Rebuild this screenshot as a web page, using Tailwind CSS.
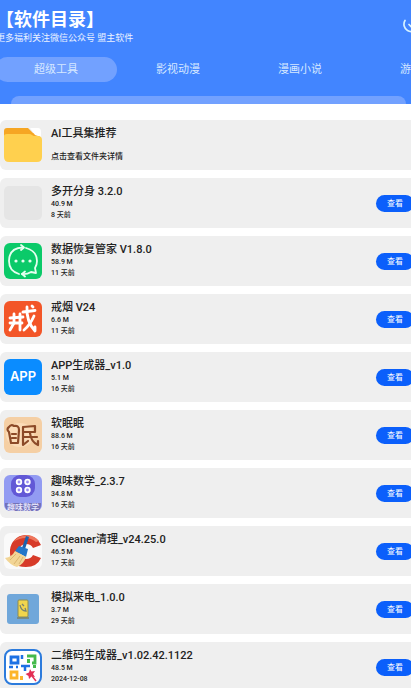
<!DOCTYPE html>
<html lang="zh-CN">
<head>
<meta charset="utf-8">
<meta name="viewport" content="width=device-width, initial-scale=1">
<title>软件目录</title>
<script src="https://cdn.jsdelivr.net/npm/@tailwindcss/browser@4"></script>
</head>
<body class="h-screen overflow-hidden bg-white font-[Roboto,'Noto_Sans_CJK_SC',sans-serif] text-[#222]">
<div class="flex h-full flex-col overflow-hidden">
  <header class="shrink-0 overflow-hidden bg-[#4285ff] text-white">
    <div class="flex items-center justify-between pt-2">
      <div class="-ml-1 whitespace-nowrap">
        <h1 class="text-[18px] leading-[24px] font-bold">【软件目录】</h1>
        <p class="text-[9px] leading-[12px] text-white/90">更多福利关注微信公众号 盟主软件</p>
      </div>
      <button type="button" aria-label="刷新" class="-mr-2 shrink-0">
        <svg width="16" height="16" viewBox="0 0 16 16" fill="none" stroke="#d5f2ff" stroke-width="1.7" stroke-linecap="round"><path d="M2 2.500A6.800 6.800 0 0 0 14.500 10"/><path d="M6 6.500L8 8.500L11 6"/></svg>
      </button>
    </div>
    <nav class="-ml-[5px] mt-[13px] flex text-[11px] text-[#d6e8ff]">
      <a href="#tools" class="flex h-[25px] w-[122px] shrink-0 items-center justify-center rounded-full bg-[#72a1ff] pt-0.5">超级工具</a>
      <a href="#video" class="flex h-[25px] w-[122px] shrink-0 items-center justify-center pt-0.5">影视动漫</a>
      <a href="#comics" class="flex h-[25px] w-[122px] shrink-0 items-center justify-center pt-0.5">漫画小说</a>
      <a href="#games" class="flex h-[25px] w-[122px] shrink-0 items-center justify-center pt-0.5">游戏专区</a>
    </nav>
    <div class="mt-[14px] mr-[5px] ml-[11px] h-2 rounded-t-lg bg-[#72a1ff]"></div>
  </header>

  <ul id="list" class="flex flex-col gap-2 pt-4"></ul>
</div>

<template id="row">
  <li class="flex h-[50px] shrink-0 items-center overflow-hidden rounded-l-md bg-[#efefef] pl-1">
    <span data-icon class="h-9 w-[38px] shrink-0"></span>
    <div class="ml-[9px] flex-1 whitespace-nowrap">
      <h2 data-name class="text-[11px] leading-[16px] font-medium"></h2>
      <p data-size class="h-2 text-[7px] leading-[8px] font-medium"></p>
      <p data-date class="text-[7px] leading-[14px] font-medium"></p>
    </div>
    <button type="button" class="-mr-[3px] h-[17px] w-[38px] shrink-0 rounded-full bg-[#0b5ffb] text-[8px] leading-[17px] text-white">查看</button>
  </li>
</template>

<template id="icons">
  <svg width="38" height="36" viewBox="0 0 38 36">
    <path d="M3 1H24L29 6L36 8V16H0V4Q0 1 3 1Z" fill="#f6a623"/>
    <path d="M26 1H34Q37 1 37 5V10L31 8Z" fill="#fff"/>
    <path d="M0 9Q0 7 3 7H25Q27 7 28 8Q29 9 31 9H34Q38 9 38 13V30Q38 35 33 35H5Q0 35 0 30Z" fill="#ffd04e"/>
  </svg>
  <svg width="38" height="36" viewBox="0 0 38 36"><rect y="1" width="38" height="34" rx="5" fill="#e5e5e5"/></svg>
  <svg width="38" height="36" viewBox="0 0 38 36">
    <rect width="38" height="36" rx="6" fill="#0bca69"/>
    <g fill="none" stroke="#e6fff0" stroke-width="1.8" stroke-linecap="round" stroke-linejoin="round">
      <path d="M15 31Q5 28 5 18Q5 5 19 4.500"/><path d="M22 5Q33 8 33 18Q33 22 31 25L32 30L27 29Q23 31.500 18 31"/><path d="M17 2L20 4.500L17 7M21 28.500L18 31L21 33.500"/>
    </g>
    <g fill="#e6fff0"><circle cx="12" cy="18" r="1.600"/><circle cx="19" cy="18" r="1.600"/><circle cx="26" cy="18" r="1.600"/></g>
  </svg>
  <svg width="38" height="36" viewBox="0 0 38 36">
    <rect width="38" height="36" rx="6" fill="#f35628"/>
    <g fill="none" stroke="#fff" stroke-width="2.800" stroke-linecap="round" stroke-linejoin="round">
      <path d="M19 11L31 9.500"/><path d="M6 17L19 16"/><path d="M6 22H18"/><path d="M10 13V22L6 29"/><path d="M16 13V29"/><path d="M23 6Q22 20 31 30V26"/><path d="M30 15Q26 24 20 29"/><path d="M28 5L29 6"/>
    </g>
  </svg>
  <svg width="38" height="36" viewBox="0 0 38 36">
    <rect width="38" height="36" rx="6" fill="#0a8cff"/>
    <text x="19" y="22" text-anchor="middle" font-family="Inter, sans-serif" font-size="13" font-weight="600" fill="#fff">APP</text>
  </svg>
  <svg width="38" height="36" viewBox="0 0 38 36">
    <rect width="38" height="36" rx="6" fill="#f5cfa4"/><ellipse cx="16" cy="18" rx="14" ry="12" fill="#fbdcb8"/>
    <g fill="none" stroke="#8c4a28" stroke-width="2.200" stroke-linecap="round" stroke-linejoin="round">
      <path d="M5 15Q2 12 5 10Q7 7 10 9Q15 8 15 13L14 26H7L5 15ZM8 17H12M8 21H12"/>
      <path d="M19 10L31 9V15H20M19 10V28L24 24M20 20H33M26 16Q27 25 34 28V24"/>
    </g>
  </svg>
  <svg width="38" height="36" viewBox="0 0 38 36">
    <rect width="38" height="36" rx="6" fill="#929bf2"/><rect x="7" width="24" height="22" rx="9" fill="#6258d6"/>
    <g fill="#9d91f4" stroke="#fff" stroke-width="1.800"><circle cx="15" cy="7" r="2.300"/><circle cx="23.500" cy="7" r="2.300"/><circle cx="15" cy="15" r="2.300"/><circle cx="23.500" cy="15" r="2.300"/></g>
    <path d="M1 28H37V31Q36 36 32 36H6Q2 36 1 31Z" fill="#7472b8"/>
    <text x="19" y="35" text-anchor="middle" font-family="Noto Sans CJK SC, sans-serif" font-size="8" font-weight="500" fill="#e8e8ff">趣味数学</text>
  </svg>
  <svg width="38" height="36" viewBox="0 0 38 36">
    <rect width="38" height="36" rx="6" fill="#fafafa"/>
    <path d="M37 12Q32 2 21 2A16 16 0 0 0 6 17Q5 34 22 34Q33 34 37 25L29 22Q27 26 22 26Q15 25 15 18Q16 11 22 11Q27 11 29 15Z" fill="#d73b29"/>
    <path d="M9 9Q15 2 24 2Q31 3 35 8L32 9Q22 1 9 9Z" fill="#ee765c"/>
    <path d="M22 3L25 4L21 16L18 15Z" fill="#1c63ad"/>
    <path d="M15 13L24 16L22 24L11 18Z" fill="#2377c9"/>
    <path d="M11 18L22 24Q20 31 13 34Q6 32 1 25Q8 24 11 18Z" fill="#f2d595"/>
    <path d="M12 21L6 27M16 23L10 31M19 24L15 31" stroke="#dcb56e" fill="none"/>
  </svg>
  <svg width="38" height="36" viewBox="0 0 38 36">
    <rect x="3" y="3" width="32" height="30" rx="3" fill="#70a7da"/>
    <rect x="14" y="9" width="10" height="17" rx="1" fill="#f1d54d" stroke="#8d8b52"/>
    <path d="M16 14Q17 20 22 20L21 17M18 13L20 15M13 27H25" fill="none" stroke="#788270" stroke-width="1.300"/>
  </svg>
  <svg width="38" height="36" viewBox="0 0 38 36">
    <rect x="1" y="1" width="36" height="34" rx="7" fill="#fff" stroke="#2c7bdc" stroke-width="2"/>
    <g fill="none" stroke-width="2.800">
      <path d="M7 8H14V14H7Z" stroke="#1c71e4"/><path d="M23 7H31V14H28" stroke="#45b94b"/><path d="M7 23H13V29H7Z" stroke="#fdb52a"/>
      <path d="M18 6V10M17 17H26M21 17V22M5 18H9M12 18H14" stroke="#1c71e4" stroke-width="2.500"/>
    </g>
    <path d="M23 10H26V14H23ZM29 16H32V19H29Z" fill="#45b94b"/><path d="M16 27H19V31H16Z" fill="#fdb52a"/>
    <path d="M26 20L27.500 22.500L31 22L29 25L31 28L27.500 27.500L25 30L24.500 27L21.500 25L25 23.500Z" fill="#e33055"/><path d="M28 27L32 32" stroke="#e33055" stroke-width="1.500"/>
  </svg>
</template>

<script>
const apps = [
  ["AI工具集推荐", "", "点击查看文件夹详情"],
  ["多开分身 3.2.0", "40.9 M", "8 天前"],
  ["数据恢复管家 V1.8.0", "58.9 M", "11 天前"],
  ["戒烟 V24", "6.6 M", "11 天前"],
  ["APP生成器_v1.0", "5.1 M", "16 天前"],
  ["软眠眠", "88.6 M", "16 天前"],
  ["趣味数学_2.3.7", "34.8 M", "16 天前"],
  ["CCleaner清理_v24.25.0", "46.5 M", "17 天前"],
  ["模拟来电_1.0.0", "3.7 M", "29 天前"],
  ["二维码生成器_v1.02.42.1122", "48.5 M", "2024-12-08"]
];
const icons = [...document.getElementById("icons").content.children];
const list = document.getElementById("list");
apps.forEach(([name, size, date], i) => {
  const row = document.getElementById("row").content.cloneNode(true);
  row.querySelector("[data-icon]").append(icons[i].cloneNode(true));
  row.querySelector("[data-name]").textContent = name;
  row.querySelector("[data-size]").textContent = size;
  const d = row.querySelector("[data-date]");
  d.textContent = date;
  // Folders have no size and no action, only a hint line
  if (!size) {
    row.querySelector("button").remove();
    d.classList.replace("text-[7px]", "text-[8px]");
  }
  list.append(row);
});
</script>
</body>
</html>
